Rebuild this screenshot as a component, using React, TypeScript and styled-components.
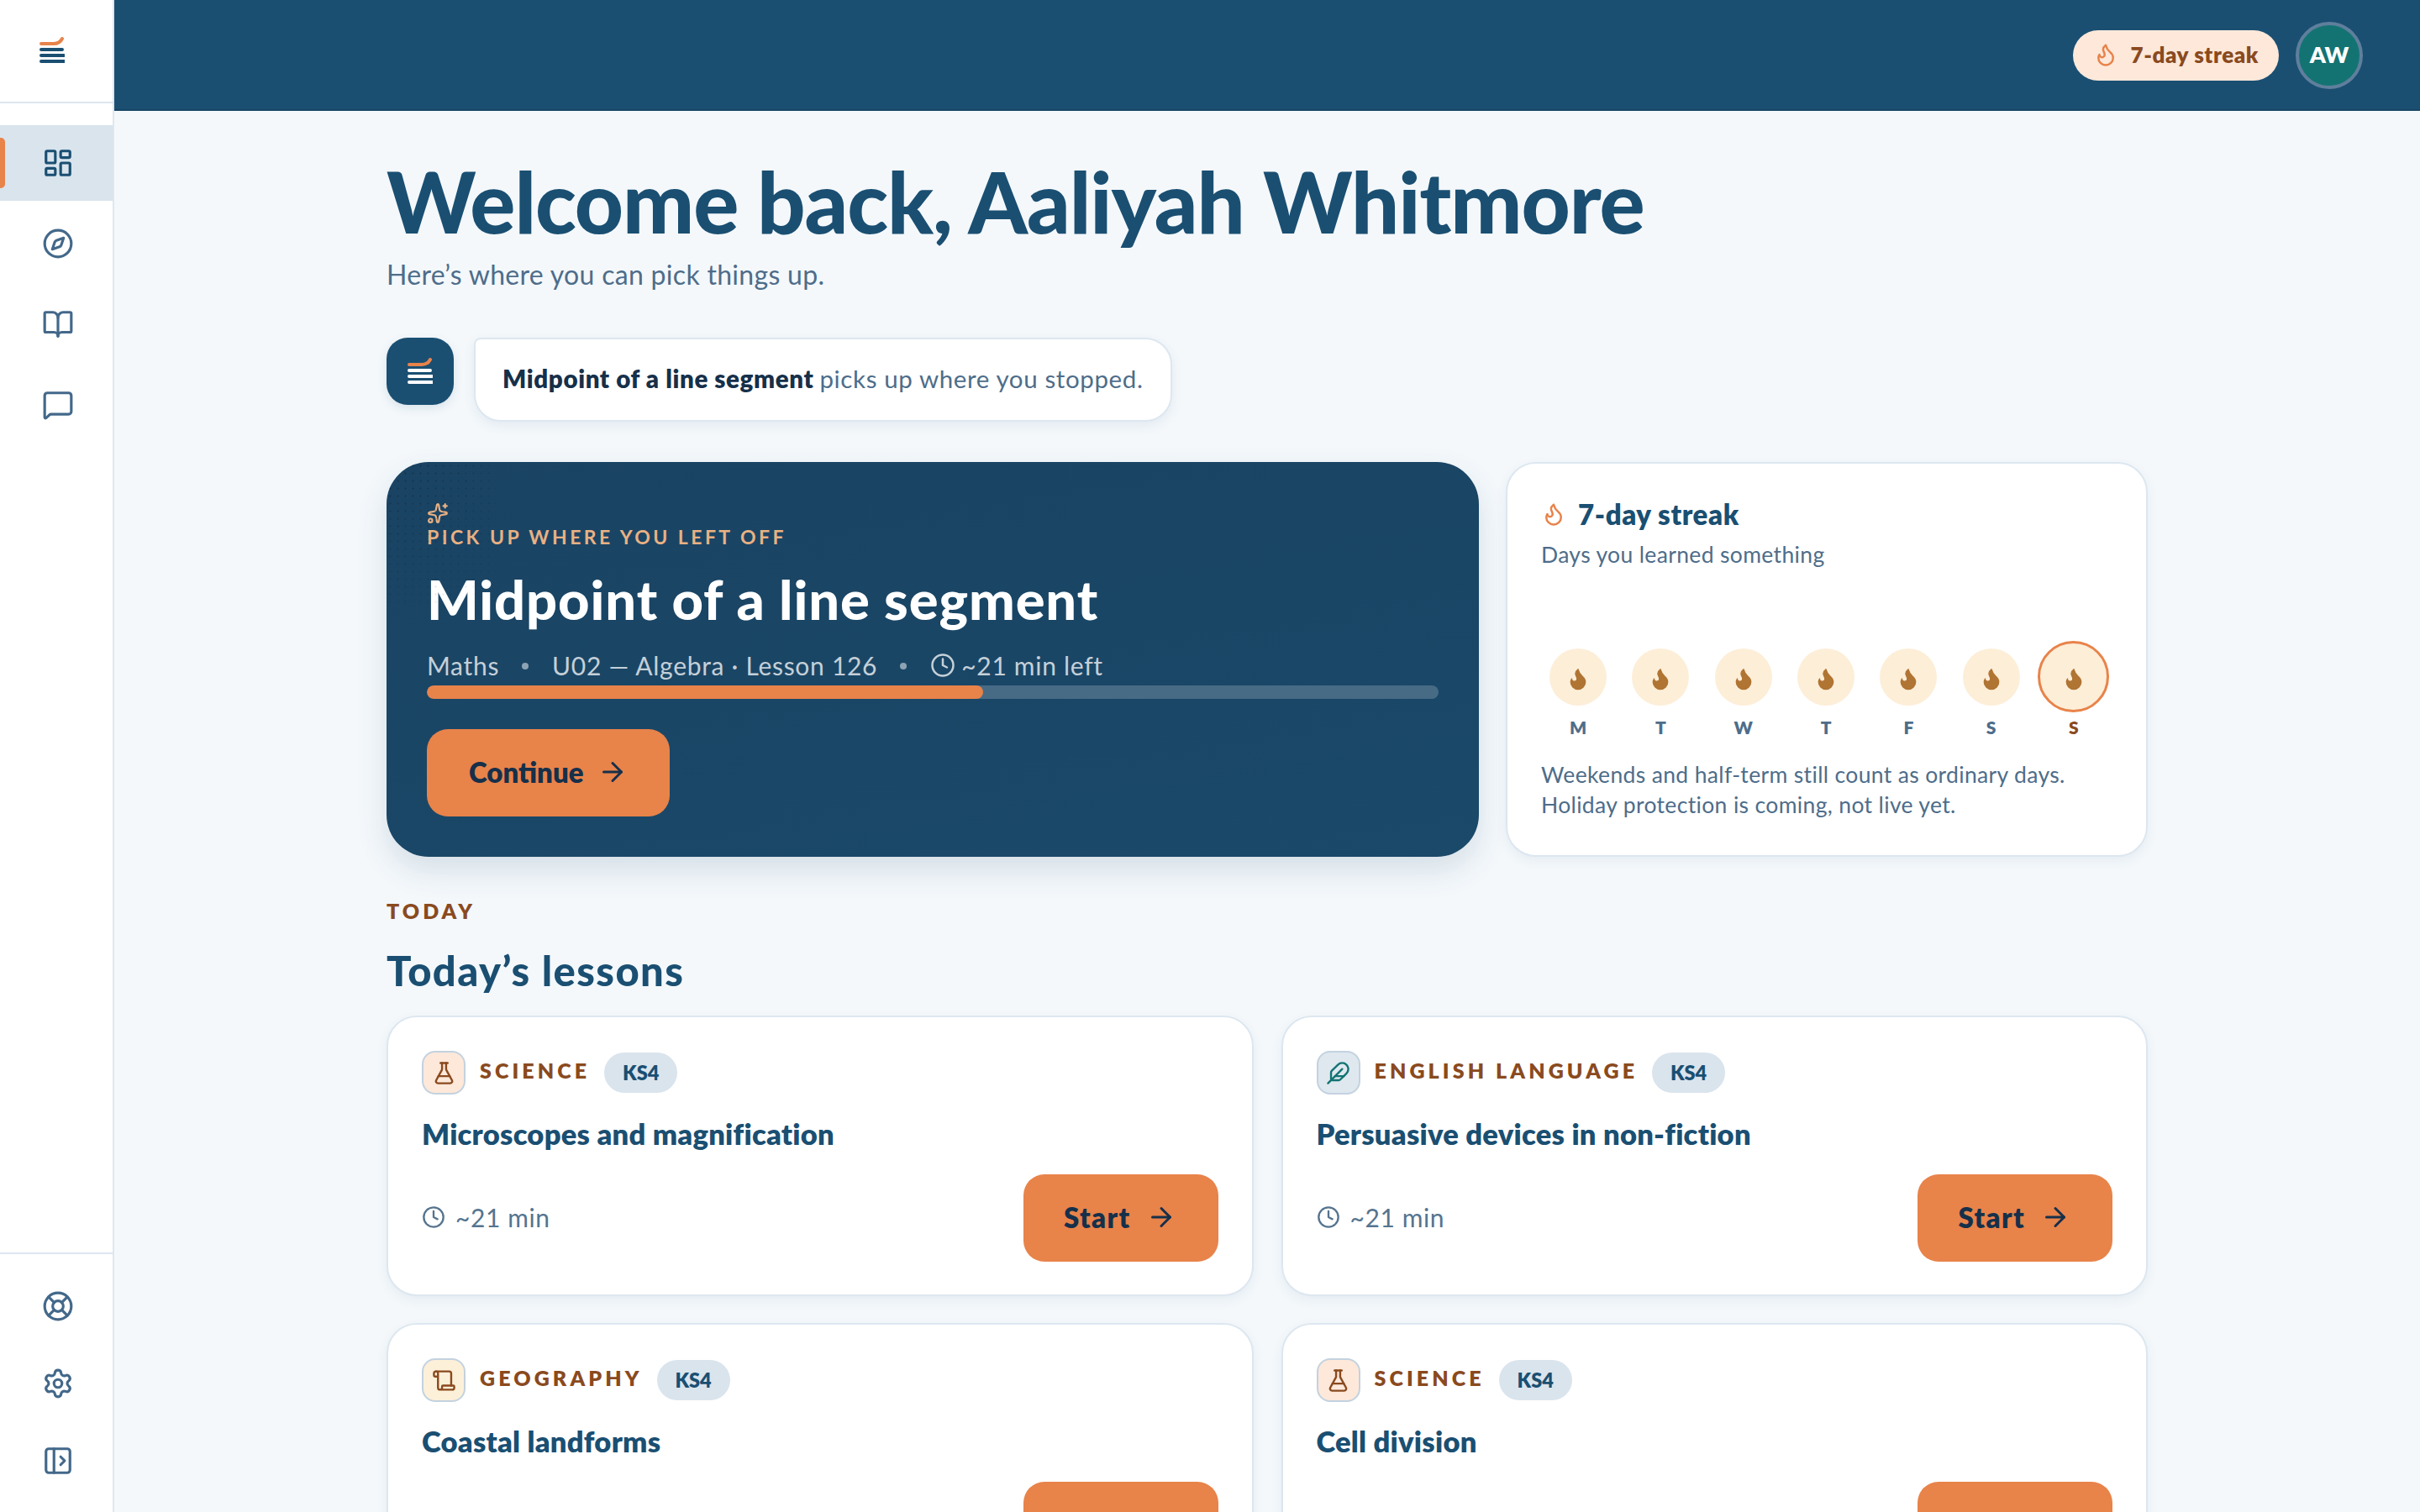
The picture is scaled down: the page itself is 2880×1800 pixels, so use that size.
import {FC} from 'react';
import styled, {createGlobalStyle} from 'styled-components';
import {
  ArrowRight,
  BookOpen,
  Clock,
  Compass,
  Feather,
  Flame,
  FlaskConical,
  LayoutDashboard,
  LifeBuoy,
  LucideIcon,
  MessageSquare,
  PanelLeftOpen,
  Scroll,
  Settings,
  Sparkles,
} from 'lucide-react';

const navy = '#1a4f72';
const ink = '#16304a';
const orange = '#e8834a';
const rust = '#8a4a1e';
const slate = '#4e6d8a';
const line = '#dde7f0';

const GlobalStyle = createGlobalStyle`
  html, body {
    margin: 0;
    height: 100%;
    overflow: hidden;
    background: #f4f8fb;
    font-family: Lato, "Noto Sans", sans-serif;
    color: ${ink};
  }
`;

const Shell = styled.div`
  display: flex;
  height: 100vh;
`;

const Sidebar = styled.aside`
  flex: 0 0 136px;
  box-sizing: border-box;
  display: flex;
  flex-direction: column;
  background: #fff;
  border-right: 2px solid ${line};
`;

const SideLogo = styled.div`
  flex: 0 0 123px;
  box-sizing: border-box;
  display: flex;
  align-items: center;
  padding: 0 0 3px 47px;
  border-bottom: 2px solid ${line};
`;

const NavList = styled.nav`
  flex: 1;
  display: flex;
  flex-direction: column;
  gap: 6px;
  padding-top: 26px;
`;

const NavFoot = styled.div`
  display: flex;
  flex-direction: column;
  gap: 2px;
  padding: 17px 0 16px;
  border-top: 2px solid ${line};
`;

const NavItem = styled.a<{$active?: boolean}>`
  position: relative;
  height: 90px;
  box-sizing: border-box;
  padding-left: 4px;
  display: flex;
  align-items: center;
  justify-content: center;
  color: ${p => (p.$active ? navy : '#43688a')};
  background: ${p => (p.$active ? '#d9e4ed' : 'transparent')};

  &::before {
    content: '';
    display: ${p => (p.$active ? 'block' : 'none')};
    position: absolute;
    left: 0;
    top: 15px;
    bottom: 15px;
    width: 6px;
    border-radius: 0 5px 5px 0;
    background: ${orange};
  }
`;

const Main = styled.div`
  flex: 1;
  min-width: 0;
  display: flex;
  flex-direction: column;
`;

const Topbar = styled.header`
  flex: 0 0 132px;
  box-sizing: border-box;
  display: flex;
  align-items: center;
  justify-content: flex-end;
  gap: 20px;
  padding: 2px 68px 0 0;
  background: ${navy};
  border-bottom: 2px solid #184666;
`;

const StreakPill = styled.div`
  height: 60px;
  box-sizing: border-box;
  display: flex;
  align-items: center;
  gap: 14px;
  padding: 0 24px 2px 24px;
  border-radius: 30px;
  background: #fde8da;
  color: ${rust};
  font-size: 26px;
  font-weight: 800;
  letter-spacing: 0.6px;
`;

const Avatar = styled.div`
  width: 80px;
  height: 80px;
  box-sizing: border-box;
  display: flex;
  align-items: center;
  justify-content: center;
  padding-bottom: 3px;
  border: 4px solid #5f7f9c;
  border-radius: 50%;
  background: #137373;
  color: #fff;
  font-size: 27px;
  font-weight: 800;
`;

const Content = styled.main`
  width: 2096px;
  margin: 0 auto;
`;

const Title = styled.h1`
  margin: 47px 0 0;
  font-size: 101px;
  line-height: 120px;
  font-weight: 900;
  letter-spacing: -1.1px;
  color: ${navy};
`;

const Subtitle = styled.p`
  margin: 6px 0 0;
  font-size: 32px;
  line-height: 44px;
  letter-spacing: 0.3px;
  color: ${slate};
`;

const Bubble = styled.div`
  display: flex;
  gap: 24px;
  margin-top: 53px;
`;

const BubbleMark = styled.div`
  width: 80px;
  height: 80px;
  display: flex;
  align-items: center;
  justify-content: center;
  padding-bottom: 2px;
  box-sizing: border-box;
  border-radius: 25px;
  background: ${navy};
  box-shadow: 0 4px 12px rgba(26, 79, 114, 0.12);
`;

const BubbleText = styled.div`
  height: 100px;
  box-sizing: border-box;
  display: flex;
  align-items: center;
  padding: 0 32px 4px 32px;
  border: 2px solid ${line};
  border-radius: 8px 32px 32px 32px;
  background: #fff;
  box-shadow: 0 5px 14px rgba(26, 79, 114, 0.08);
  font-size: 29.5px;
  letter-spacing: 0.62px;
  color: ${slate};

  strong {
    color: ${ink};
    font-weight: 800;
    margin-right: 7px;
  }
`;

const TopRow = styled.section`
  display: grid;
  grid-template-columns: 1300px 764px;
  gap: 32px;
  margin-top: 48px;
`;

const Hero = styled.div`
  position: relative;
  height: 470px;
  box-sizing: border-box;
  padding: 48px;
  border-radius: 50px;
  background: linear-gradient(170deg, #1a4363 0%, #1a4969 100%);
  box-shadow: 0 16px 36px rgba(26, 79, 114, 0.14);
  overflow: hidden;
  color: #fff;

  &::before {
    content: '';
    position: absolute;
    left: 0;
    top: 0;
    width: 130px;
    height: 170px;
    background-image: radial-gradient(rgba(10, 30, 50, 0.35) 1px, transparent 1.2px);
    background-size: 9px 9px;
    -webkit-mask-image: radial-gradient(circle at 0 0, #000, transparent 100%);
  }
`;

const Eyebrow = styled.div`
  margin-top: 2px;
  font-size: 23px;
  line-height: 27px;
  font-weight: 700;
  letter-spacing: 3.45px;
  color: #e9b183;
`;

const SparkIcon = styled(Sparkles)`
  display: block;
  color: #e9b183;
`;

const HeroTitle = styled.h2`
  margin: 20px 0 0;
  font-size: 65px;
  line-height: 80px;
  font-weight: 900;
  letter-spacing: 0.9px;
`;

const HeroMeta = styled.div`
  display: flex;
  align-items: center;
  margin-top: 19px;
  height: 40px;
  padding-bottom: 1px;
  font-size: 30px;
  letter-spacing: 0.7px;
  color: rgba(255, 255, 255, 0.75);
`;

const MetaDot = styled.span`
  width: 8px;
  height: 8px;
  margin: 2px 28px 0 27px;
  border-radius: 50%;
  background: rgba(255, 255, 255, 0.5);
`;

const ClockIcon = styled(Clock)`
  margin-right: 7px;
  flex: none;
`;

const Track = styled.div`
  height: 16px;
  margin-top: 3px;
  border-radius: 8px;
  background: rgba(255, 255, 255, 0.2);
  overflow: hidden;
`;

const TrackFill = styled.div`
  height: 100%;
  border-radius: 8px;
  background: ${orange};
`;

const PrimaryButton = styled.button`
  height: 104px;
  box-sizing: border-box;
  display: inline-flex;
  align-items: center;
  gap: 16px;
  padding: 0 50px 2px;
  border: 0;
  border-radius: 25px;
  background: ${orange};
  color: ${ink};
  font-family: inherit;
  font-size: 33px;
  font-weight: 800;
`;

const HeroButton = styled(PrimaryButton)`
  margin-top: 36px;
`;

const Panel = styled.div`
  box-sizing: border-box;
  border: 2px solid ${line};
  border-radius: 36px;
  background: #fff;
  box-shadow: 0 5px 14px rgba(26, 79, 114, 0.07);
`;

const StreakCard = styled(Panel)`
  display: flex;
  flex-direction: column;
  padding: 38px 40px 40px;
`;

const StreakHead = styled.div`
  display: flex;
  align-items: center;
  gap: 14px;
  height: 44px;
  font-size: 33px;
  font-weight: 800;
  letter-spacing: 0.6px;
  color: ${navy};
`;

const StreakSub = styled.div`
  margin-top: 8px;
  font-size: 26.5px;
  line-height: 36px;
  letter-spacing: 0.35px;
  color: ${slate};
`;

const Days = styled.div`
  display: grid;
  grid-template-columns: repeat(7, 98.3px);
  margin: 85px 0 0 -5px;
`;

const Day = styled.div`
  display: flex;
  flex-direction: column;
  align-items: center;
`;

const DayDisc = styled.div`
  height: 85px;
  display: flex;
  align-items: center;
  justify-content: center;
`;

const DayCircle = styled.div<{$today?: boolean}>`
  width: ${p => (p.$today ? 85 : 68)}px;
  height: ${p => (p.$today ? 85 : 68)}px;
  box-sizing: border-box;
  display: flex;
  align-items: center;
  justify-content: center;
  padding-top: 4px;
  border-radius: 50%;
  border: ${p => (p.$today ? `3px solid ${orange}` : '0')};
  background: #fdeed8;
  color: #b07433;
`;

const DayLabel = styled.div<{$today?: boolean}>`
  margin-top: 4px;
  font-size: 21px;
  line-height: 28px;
  font-weight: 800;
  color: ${p => (p.$today ? rust : slate)};
`;

const StreakNote = styled.p`
  margin: 24px 0 0;
  font-size: 26.5px;
  line-height: 36px;
  letter-spacing: 0.35px;
  color: ${slate};
`;

const Kicker = styled.div`
  margin-top: 48px;
  font-size: 25px;
  line-height: 32px;
  font-weight: 800;
  letter-spacing: 4px;
  color: ${rust};
`;

const SectionTitle = styled.h2`
  margin: 23px 0 0;
  font-size: 49px;
  line-height: 64px;
  font-weight: 900;
  letter-spacing: 1.4px;
  color: ${navy};
`;

const LessonGrid = styled.div`
  display: grid;
  grid-template-columns: 1fr 1fr;
  gap: 32px 33px;
  margin-top: 22px;
`;

const LessonCard = styled(Panel)`
  height: 334px;
  padding: 40px;
`;

const LessonHead = styled.div`
  display: flex;
  align-items: center;
`;

const SubjectIcon = styled.div<{$bg: string; $fg: string}>`
  width: 52px;
  height: 52px;
  box-sizing: border-box;
  display: flex;
  align-items: center;
  justify-content: center;
  border: 2px solid #c3d2df;
  border-radius: 16px;
  background: ${p => p.$bg};
  color: ${p => p.$fg};
`;

const Subject = styled.span`
  margin: 0 17px;
  padding-bottom: 6px;
  font-size: 25px;
  font-weight: 800;
  letter-spacing: 4.1px;
  color: ${rust};
`;

const Level = styled.span`
  width: 87px;
  height: 48px;
  display: flex;
  align-items: center;
  justify-content: center;
  border-radius: 24px;
  background: #dae4ed;
  font-size: 23.5px;
  font-weight: 800;
  color: ${navy};
`;

const LessonTitle = styled.h3`
  margin: 24px 0 0;
  font-size: 34.5px;
  line-height: 46px;
  font-weight: 800;
  letter-spacing: 0.25px;
  color: ${navy};
`;

const LessonFoot = styled.div`
  display: flex;
  align-items: center;
  justify-content: space-between;
  margin-top: 25px;
`;

const Duration = styled.span`
  display: flex;
  align-items: center;
  gap: 12px;
  padding-bottom: 3px;
  font-size: 30px;
  letter-spacing: 0.6px;
  color: #55748f;
`;

const StartButton = styled(PrimaryButton)`
  gap: 18px;
  padding: 0 50px 2px 48px;
  letter-spacing: 1.4px;
`;

const BrandMark: FC<{lines: string}> = ({lines}) => (
  <svg width="30" height="32" viewBox="0 0 30 32" fill="none" strokeWidth="4" strokeLinecap="round">
    <path d="M2 9h15c4 0 8-2 10-6" stroke={orange} />
    <path d="M2 16h25M2 23h27M2 30h28" stroke={lines} />
  </svg>
);

const NavIcon: FC<{glyph: LucideIcon}> = ({glyph: Glyph}) => <Glyph size={38} strokeWidth={2} />;

const days = ['M', 'T', 'W', 'T', 'F', 'S', 'S'];

interface Lesson {
  subject: string;
  title: string;
  glyph: LucideIcon;
  bg: string;
  fg: string;
}

const lessons: Lesson[] = [
  {subject: 'SCIENCE', title: 'Microscopes and magnification', glyph: FlaskConical, bg: '#fde8da', fg: rust},
  {subject: 'ENGLISH LANGUAGE', title: 'Persuasive devices in non-fiction', glyph: Feather, bg: '#dfe8ef', fg: '#137373'},
  {subject: 'GEOGRAPHY', title: 'Coastal landforms', glyph: Scroll, bg: '#fdf0d9', fg: rust},
  {subject: 'SCIENCE', title: 'Cell division', glyph: FlaskConical, bg: '#fde8da', fg: rust},
];

const Side: FC = () => (
  <Sidebar>
    <SideLogo>
      <BrandMark lines={navy} />
    </SideLogo>
    <NavList>
      <NavItem $active>
        <NavIcon glyph={LayoutDashboard} />
      </NavItem>
      <NavItem>
        <NavIcon glyph={Compass} />
      </NavItem>
      <NavItem>
        <NavIcon glyph={BookOpen} />
      </NavItem>
      <NavItem>
        <NavIcon glyph={MessageSquare} />
      </NavItem>
    </NavList>
    <NavFoot>
      <NavItem>
        <NavIcon glyph={LifeBuoy} />
      </NavItem>
      <NavItem>
        <NavIcon glyph={Settings} />
      </NavItem>
      <NavItem>
        <NavIcon glyph={PanelLeftOpen} />
      </NavItem>
    </NavFoot>
  </Sidebar>
);

const App: FC = () => {
  return (
    <Shell>
      <GlobalStyle />
      <Side />
      <Main>
        <Topbar>
          <StreakPill>
            <Flame size={30} color={orange} strokeWidth={2} />
            7-day streak
          </StreakPill>
          <Avatar>AW</Avatar>
        </Topbar>
        <Content>
          <Title>Welcome back, Aaliyah Whitmore</Title>
          <Subtitle>Here’s where you can pick things up.</Subtitle>
          <Bubble>
            <BubbleMark>
              <BrandMark lines="#fff" />
            </BubbleMark>
            <BubbleText>
              <strong>Midpoint of a line segment</strong> picks up where you stopped.
            </BubbleText>
          </Bubble>
          <TopRow>
            <Hero>
              <SparkIcon size={26} strokeWidth={2} />
              <Eyebrow>PICK UP WHERE YOU LEFT OFF</Eyebrow>
              <HeroTitle>Midpoint of a line segment</HeroTitle>
              <HeroMeta>
                Maths
                <MetaDot />
                U02 — Algebra · Lesson 126
                <MetaDot />
                <ClockIcon size={30} strokeWidth={2} />
                ~21 min left
              </HeroMeta>
              <Track>
                <TrackFill style={{width: '55%'}} />
              </Track>
              <HeroButton>
                Continue
                <ArrowRight size={36} strokeWidth={2} />
              </HeroButton>
            </Hero>
            <StreakCard>
              <StreakHead>
                <Flame size={30} color={orange} strokeWidth={2} />
                7-day streak
              </StreakHead>
              <StreakSub>Days you learned something</StreakSub>
              <Days>
                {days.map((d, i) => (
                  <Day key={i}>
                    <DayDisc>
                      <DayCircle $today={i === 6}>
                        <Flame size={30} fill="currentColor" stroke="currentColor" strokeWidth={1} />
                      </DayCircle>
                    </DayDisc>
                    <DayLabel $today={i === 6}>{d}</DayLabel>
                  </Day>
                ))}
              </Days>
              <StreakNote>
                Weekends and half-term still count as ordinary days.
                <br />
                Holiday protection is coming, not live yet.
              </StreakNote>
            </StreakCard>
          </TopRow>
          <Kicker>TODAY</Kicker>
          <SectionTitle>Today’s lessons</SectionTitle>
          <LessonGrid>
            {lessons.map(l => (
              <LessonCard key={l.title}>
                <LessonHead>
                  <SubjectIcon $bg={l.bg} $fg={l.fg}>
                    <l.glyph size={29} strokeWidth={2} />
                  </SubjectIcon>
                  <Subject>{l.subject}</Subject>
                  <Level>KS4</Level>
                </LessonHead>
                <LessonTitle>{l.title}</LessonTitle>
                <LessonFoot>
                  <Duration>
                    <Clock size={28} strokeWidth={2} />
                    ~21 min
                  </Duration>
                  <StartButton>
                    Start
                    <ArrowRight size={36} strokeWidth={2} />
                  </StartButton>
                </LessonFoot>
              </LessonCard>
            ))}
          </LessonGrid>
        </Content>
      </Main>
    </Shell>
  );
};

export default App;
